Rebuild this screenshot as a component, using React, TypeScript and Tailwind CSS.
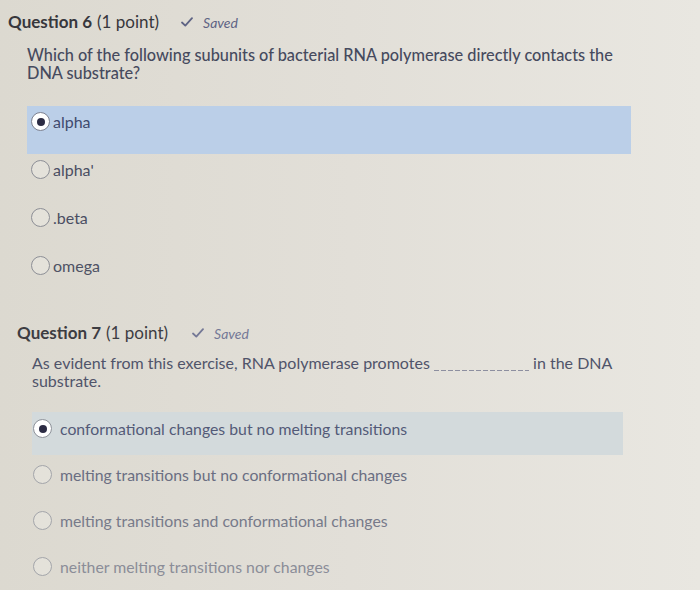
import { ReactNode } from "react";

type Option = { label: ReactNode; selected?: boolean; color: string };

function Radio({ selected, ring }: { selected?: boolean; ring: string }) {
  return (
    <span
      className={`w-[19px] h-[19px] rounded-full border-[1.5px] ${ring} flex items-center justify-center shrink-0 ${
        selected ? "bg-white" : "bg-[#f0eee9]/40"
      }`}
    >
      {selected && <span className="w-[8px] h-[8px] rounded-full bg-[#2c2c44]" />}
    </span>
  );
}

function Saved({ color }: { color: string }) {
  return (
    <span className={`flex items-center gap-[10px] italic text-[14px] ${color}`}>
      <svg width="12" height="10" viewBox="0 0 12 10" fill="none">
        <path d="M1 5.5 L4.3 8.6 L11 1.2" stroke="currentColor" strokeWidth="1.8" strokeLinecap="round" strokeLinejoin="round" />
      </svg>
      Saved
    </span>
  );
}

const q6Options: Option[] = [
  { label: "alpha", selected: true, color: "text-[#3f4a6e]" },
  { label: "alpha'", color: "text-[#4a4e62]" },
  { label: ".beta", color: "text-[#4a4e62]" },
  { label: "omega", color: "text-[#4e5264]" },
];

const q7Options: Option[] = [
  { label: "conformational changes but no melting transitions", selected: true, color: "text-[#535a78]" },
  { label: "melting transitions but no conformational changes", color: "text-[#6a6e82]" },
  { label: "melting transitions and conformational changes", color: "text-[#777a8a]" },
  { label: "neither melting transitions nor changes", color: "text-[#8b8d98]" },
];

export default function App() {
  return (
    <div className="w-[700px] h-[590px] overflow-hidden flex flex-col bg-gradient-to-r from-[#dcd9d0] via-[#e2dfd8] to-[#e9e7e1] font-['Lato',sans-serif]">
      <div className="flex-1">
        {/* Question 6 */}
        <div className="pl-[8px] pt-[12px] flex items-center h-[32px] text-[17px] text-[#37373c]">
          <span className="font-bold">Question 6</span>
          <span className="ml-[5px]">(1 point)</span>
          <span className="ml-[22px]">
            <Saved color="text-[#5e6384]" />
          </span>
        </div>
        <p className="ml-[27px] mt-[14px] w-[592px] text-[16.3px] leading-[18px] font-medium text-[#464a5e]">
          Which of the following subunits of bacterial RNA polymerase directly contacts the DNA substrate?
        </p>
        <div className="ml-[27px] mt-[24px] w-[604px]">
          {q6Options.map((o, i) => (
            <div
              key={i}
              className={`h-[48px] pt-[6px] pl-[4px] flex items-start gap-[3px] ${o.selected ? "bg-[#bbcfe8]" : ""}`}
            >
              <Radio selected={o.selected} ring={o.selected ? "border-[#7d8190]" : "border-[#8d8f96]"} />
              <span className={`text-[16px] leading-[19px] ${o.color}`}>{o.label}</span>
            </div>
          ))}
        </div>

        {/* Question 7 */}
        <div className="pl-[17px] mt-[25px] flex items-center h-[20px] text-[17px] text-[#3d3d42]">
          <span className="font-bold">Question 7</span>
          <span className="ml-[5px]">(1 point)</span>
          <span className="ml-[24px]">
            <Saved color="text-[#747896]" />
          </span>
        </div>
        <p className="ml-[32px] mt-[11px] w-[590px] text-[16px] leading-[18px] text-[#50546a]">
          As evident from this exercise, RNA polymerase promotes{" "}
          <span className="inline-block w-[95px] h-[1.5px] align-[-2px] bg-[repeating-linear-gradient(to_right,#8d8fa0_0_5px,transparent_5px_7px)]" />{" "}
          in the DNA substrate.
        </p>
        <div className="ml-[32px] mt-[22px] w-[591px]">
          {q7Options.map((o, i) => (
            <div
              key={i}
              className={`pt-[7px] pl-[1px] flex items-start gap-[8px] ${
                o.selected ? "bg-[#d3dadc] h-[43px] mb-[3px]" : "h-[46px]"
              }`}
            >
              <Radio selected={o.selected} ring={o.selected ? "border-[#8e929a]" : "border-[#a3a5aa]"} />
              <span className={`text-[15.8px] leading-[19px] ${o.color}`}>{o.label}</span>
            </div>
          ))}
        </div>
      </div>
      <div className="h-[2px] bg-white shrink-0" />
    </div>
  );
}
